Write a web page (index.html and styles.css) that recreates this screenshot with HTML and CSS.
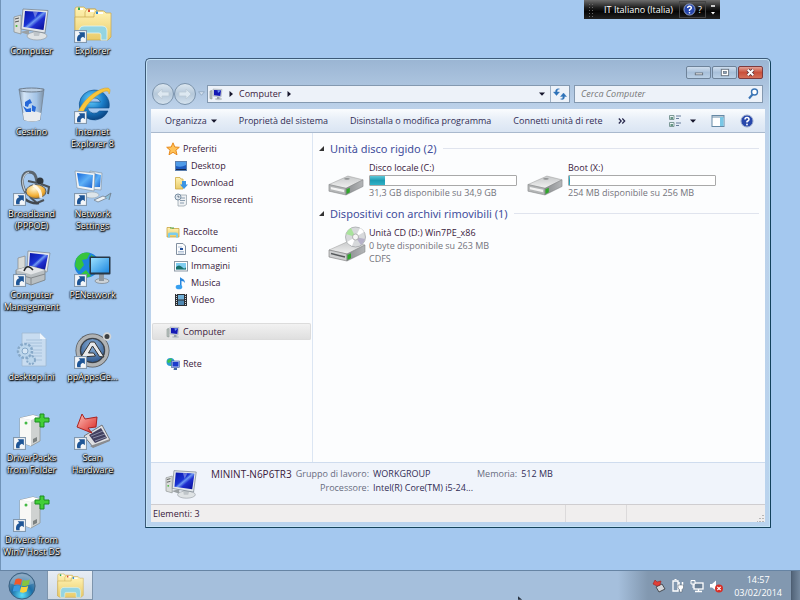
FILE: index.html
```html
<!DOCTYPE html>
<html lang="it">
<head>
<meta charset="utf-8">
<title>Computer</title>
<link rel="stylesheet" href="styles.css">
</head>
<body>
<svg class="defs" aria-hidden="true">
  <defs>
    <linearGradient id="screen" x1="0" y1="0" x2="1" y2="1"><stop offset="0" stop-color="#0712a8"/><stop offset=".42" stop-color="#1a34d4"/><stop offset=".5" stop-color="#6f9af2"/><stop offset=".62" stop-color="#1f2fd0"/><stop offset="1" stop-color="#050a8c"/></linearGradient>
    <linearGradient id="lcd" x1="0" y1="0" x2="1" y2="1"><stop offset="0" stop-color="#1767d8"/><stop offset=".5" stop-color="#5db0f8"/><stop offset="1" stop-color="#1c63cf"/></linearGradient>
    <linearGradient id="cyan" x1="0" y1="0" x2="1" y2="1"><stop offset="0" stop-color="#9be0ff"/><stop offset="1" stop-color="#1d88e0"/></linearGradient>
    <linearGradient id="metal" x1="0" y1="0" x2="0" y2="1"><stop offset="0" stop-color="#fff"/><stop offset="1" stop-color="#b3b7bb"/></linearGradient>
    <linearGradient id="side" x1="0" y1="0" x2="1" y2="0"><stop offset="0" stop-color="#8b8e90"/><stop offset="1" stop-color="#b4b6b8"/></linearGradient>
    <linearGradient id="top" x1="0" y1="0" x2="0" y2="1"><stop offset="0" stop-color="#c6c8c9"/><stop offset="1" stop-color="#f1f1f1"/></linearGradient>
    <linearGradient id="manila" x1="0" y1="0" x2="0" y2="1"><stop offset="0" stop-color="#fff3b4"/><stop offset="1" stop-color="#e9cb69"/></linearGradient>
    <linearGradient id="glass" x1="0" y1="0" x2="1" y2="0"><stop offset="0" stop-color="#7f95aa"/><stop offset=".2" stop-color="#d8e8f8"/><stop offset=".7" stop-color="#a3c3e6"/><stop offset="1" stop-color="#7b8c9d"/></linearGradient>
    <radialGradient id="ball" cx=".4" cy=".3" r=".8"><stop offset="0" stop-color="#6bd4ff"/><stop offset=".5" stop-color="#1a7dc8"/><stop offset="1" stop-color="#07356f"/></radialGradient>
    <radialGradient id="orb" cx=".5" cy=".85" r=".8"><stop offset="0" stop-color="#5ce0fa"/><stop offset=".5" stop-color="#1c6fa8"/><stop offset="1" stop-color="#7396b5"/></radialGradient>
    <radialGradient id="gold" cx=".4" cy=".3" r=".8"><stop offset="0" stop-color="#fff5cf"/><stop offset=".6" stop-color="#f4b33c"/><stop offset="1" stop-color="#a86d14"/></radialGradient>
    <linearGradient id="red" x1="0" y1="0" x2="1" y2="1"><stop offset="0" stop-color="#ffc0b8"/><stop offset="1" stop-color="#d8231f"/></linearGradient>
    <radialGradient id="autoit" cx=".5" cy=".3" r=".7"><stop offset="0" stop-color="#8fb4dc"/><stop offset="1" stop-color="#2d568c"/></radialGradient>
  </defs>

  <symbol id="i-shortcut" viewBox="0 0 12 12"><rect x=".5" y=".5" width="11" height="11" fill="#f3f6f9" stroke="#8298ae"/><path d="M3 10.300C2.300 6.500 3.800 4.600 5.800 4L4.300 2H10V7.700L8.300 6.200C6.200 6.800 5.800 8.200 6.200 10.300Z" fill="#1e5596"/></symbol>

  <symbol id="i-computer" viewBox="0 0 38 36">
    <path d="M1 11L8 9V28L1 26Z" fill="#d9dcda" stroke="#878c8c" stroke-width=".7"/><path d="M2 13L6 12M2 16L6 15" stroke="#555"/><circle cx="3.500" cy="20" r="1" fill="#47b83b"/>
    <path d="M7 26L16 24L16 29Z" fill="#9ba1a4"/>
    <ellipse cx="24" cy="30" rx="10" ry="4" fill="#dfe3e5" stroke="#969da3" stroke-width=".7"/><path d="M20 23H28L26 30H21Z" fill="#bfc5c9"/>
    <path d="M10 3L35 4.500L32 27L8 23Z" fill="#e3e7ea" stroke="#7b858e" stroke-width=".8"/><path d="M12 5L33 6.300L30.500 24L10.500 21Z" fill="url(#screen)"/><path d="M20 5.500L25 5.800L22 12Z" fill="#fff" opacity=".35"/>
  </symbol>

  <symbol id="i-folders" viewBox="0 0 38 36">
    <path d="M1 3Q1 1 3 1H10L12 3H22V32H1Z" fill="url(#manila)" stroke="#c8a64c" stroke-width=".7"/><path d="M11 6L13 3H21L23 5H29V32H11Z" fill="url(#manila)" stroke="#c8a64c" stroke-width=".7"/>
    <path d="M20 8L22 5H30L32 7H37V31L34 34H4L1 32V11H20Z" fill="url(#manila)" stroke="#c8a64c" stroke-width=".7"/>
    <path d="M4 2H9V4H4Z" fill="#fff"/><path d="M4 1.500H6V4H4Z" fill="#34a853"/><path d="M14 4H20V6H14Z" fill="#fff"/><path d="M14 3.500H16V6H14Z" fill="#d84a33"/><path d="M23 6H29V8H23Z" fill="#fff"/><path d="M22 5.500H24V8H22Z" fill="#2988d4"/>
    <path d="M5 34V26Q5 20 10 20H28Q33 20 33 25V34H27V29Q27 27 25 27H13Q11 27 11 29V34Z" fill="#8bd5ee" stroke="#e4f9ff" stroke-width=".8" opacity=".9"/>
  </symbol>

  <symbol id="i-bin" viewBox="0 0 38 36">
    <path d="M6 2L31 2L27 33Q19 36 11 33Z" fill="url(#glass)" stroke="#778797" opacity=".9"/>
    <path d="M10 26Q18 22 28 26L27 33Q19 36 11 33Z" fill="#e9ecef"/><ellipse cx="18.500" cy="3" rx="12.500" ry="2" fill="#b9cde2" stroke="#6f7e8e"/>
    <path d="M12 15L17 12L19 16L16 17L15 20L12 19ZM10 19L14 22L18 21V25L13 25ZM19 18L23 20L22 25L19 24Z" fill="#2668d8"/>
  </symbol>

  <symbol id="i-ie" viewBox="0 0 38 36">
    <path d="M20 3A15 15 0 1 0 34 24H25.500A7 7 0 0 1 13.500 21H35A15 15 0 0 0 20 3ZM13.500 15A7 6.500 0 0 1 26.500 15Z" fill="url(#ball)" fill-rule="evenodd" stroke="#0d4c86" stroke-width=".6"/>
    <path d="M8 29C2 34 2 28 6 21C12 10 26 0 34 1C37 2 36 5 35 7C35 4 33 3 29 5C20 9 10 19 8 29Z" fill="#f8c63c" stroke="#d99a1c" stroke-width=".5"/>
  </symbol>

  <symbol id="i-phone" viewBox="0 0 38 36">
    <path d="M13 24C6 12 10 3 16 3C22 3 23 7 24 13" fill="none" stroke="#5c666f" stroke-width="3"/><path d="M12 22C7 12 11 4 16 3.500" fill="none" stroke="#c5ced5" stroke-width="1.200"/>
    <ellipse cx="27" cy="12" rx="3.500" ry="3.500" fill="#30373d"/><path d="M24 14L15 12M28 15L36 18L35 25M17 28L24 34L31 31" fill="none" stroke="#4b5258" stroke-width="2"/>
    <ellipse cx="23" cy="22.500" rx="10" ry="7" fill="url(#gold)" stroke="#5b6064" stroke-width="1"/><path d="M20 16Q28 20 28 29" fill="none" stroke="#fff" stroke-width="3" opacity=".8"/><path d="M12 30Q18 35 26 34" fill="none" stroke="#42484e" stroke-width="2.500"/>
  </symbol>

  <symbol id="i-lan" viewBox="0 0 38 36">
    <path d="M16 2L28 4L27 21L16 20Z" fill="#e5edf5" stroke="#8596a6" stroke-width=".7"/><path d="M18 4L27 6L26 18L18 18Z" fill="url(#lcd)"/>
    <path d="M1 2L21 4L20 22L3 19Z" fill="#eff4f8" stroke="#8596a6" stroke-width=".7"/><path d="M3 4L19 6L18 19L5 17Z" fill="url(#lcd)"/><ellipse cx="18" cy="26" rx="7" ry="3" fill="#dde5ea" stroke="#9aa7b0" stroke-width=".6"/>
    <path d="M20 31L29 27L33 29L24 33Z" fill="#edf2f5" stroke="#74828f" stroke-width=".8"/><path d="M31 28L37 24L35 31" fill="#8bbfda" stroke="#768796"/>
  </symbol>

  <symbol id="i-manage" viewBox="0 0 38 36">
    <path d="M5 8L12 6V22L5 20Z" fill="#d9dcd9" stroke="#888" stroke-width=".7"/><path d="M15 1L37 3L34 22L14 19Z" fill="#e7eaee" stroke="#7c858d" stroke-width=".7"/><path d="M17 3L35 5L32 20L16 17Z" fill="url(#screen)"/>
    <path d="M3 20L17 16L32 20V30L18 35L3 29Z" fill="#b9bfc2" stroke="#777d80" stroke-width=".8"/><path d="M3 20L17 16L32 20L18 24.500Z" fill="#e3e6e8"/><path d="M3 24L18 28L32 24M18 28V35" fill="none" stroke="#84898c"/><path d="M11 21Q14 13 20 20" fill="none" stroke="#262a2d" stroke-width="1.500"/>
  </symbol>

  <symbol id="i-globe" viewBox="0 0 38 36">
    <circle cx="13" cy="15" r="12.500" fill="#1d83df"/><path d="M2 9Q7 1 16 3L13 9L8 10L10 15L5 21L1 16ZM17 5Q24 8 24 14L20 20L15 17L16 11ZM7 24L12 20L17 26L12 28Z" fill="#36c43d"/>
    <ellipse cx="28" cy="31" rx="7" ry="2.500" fill="#cdd3d8" stroke="#7a8289" stroke-width=".7"/><path d="M25 24H30V31H25Z" fill="#8e979f"/><rect x="15.500" y="6.500" width="21" height="18" rx="1" fill="#273746"/><rect x="17" y="8" width="18" height="14.500" fill="url(#cyan)"/>
  </symbol>

  <symbol id="i-ini" viewBox="0 0 38 36">
    <path d="M9 1H27L33 7V34H9Z" fill="#c8dcf0" stroke="#9fb8d0" stroke-width=".8"/><path d="M27 1V7H33Z" fill="#eef6fd"/><path d="M13 8H29M13 11H29M13 14H29M20 18H29M20 21H29M20 24H29M20 28H29" stroke="#a8c2dc"/>
    <circle cx="12" cy="19" r="7" fill="#bcd6ec" stroke="#87a9c9" stroke-width="2.500" stroke-dasharray="2.500 1.500"/><circle cx="12" cy="19" r="3" fill="#d5e6f5" stroke="#87a9c9"/><circle cx="18" cy="28" r="4" fill="#bcd6ec" stroke="#87a9c9" stroke-width="2" stroke-dasharray="2 1.200"/>
  </symbol>

  <symbol id="i-autoit" viewBox="0 0 38 36">
    <circle cx="18.500" cy="18.500" r="17" fill="#55585b"/><circle cx="18.500" cy="18.500" r="14.500" fill="none" stroke="#b0b3b5" stroke-width="3.500"/><circle cx="18.500" cy="18.500" r="12" fill="url(#autoit)" stroke="#35393e"/>
    <path d="M7 25L16.500 10H20.500L30 25L25.500 24.500L18.500 14L14.500 21H19.500L21.500 24Z" fill="#e7e9eb" stroke="#333" stroke-width="1"/><circle cx="33" cy="4.500" r="3.400" fill="#3d4043" stroke="#d3d6d8" stroke-width="1.800"/>
  </symbol>

  <symbol id="i-tower" viewBox="0 0 38 36">
    <path d="M7 5L20 2L27 4V28L18 33L7 29Z" fill="#cfd2d1" stroke="#8f9493" stroke-width=".8"/><path d="M7 5L18 7V33L7 29Z" fill="#f8f8f6"/><path d="M7 5L20 2L27 4L18 7Z" fill="#fff"/><circle cx="13" cy="10" r="1.500" fill="#43b944"/><path d="M20 26L24 24V28L20 30Z" fill="#7c8180"/>
    <path d="M27 1H31V5H36V9H31V14H27V9H22V5H27Z" fill="#43cf37" stroke="#1c8c20" stroke-width="1"/>
  </symbol>

  <symbol id="i-scan" viewBox="0 0 38 36">
    <path d="M10 23L28 12L36 27L19 34Z" fill="#dfe0e3" stroke="#73777d"/><path d="M15 22L27 15L33 25L21 30Z" fill="#41405f"/><path d="M17 23L29 18M19 25L31 21M21 28L32 24" stroke="#878ba4"/><path d="M16 33L36 26V28L19 35Z" fill="#8a8c90"/>
    <path d="M3 14L8 1L11 6L23 4L22 14L14 15L18 20Z" fill="url(#red)" stroke="#a82320"/>
  </symbol>

  <symbol id="i-drive" viewBox="0 0 38 22">
    <path d="M1 10L21 1L37 5L19 14Z" fill="url(#top)" stroke="#999" stroke-width=".5"/><path d="M1 10L19 14V21L1 17Z" fill="#b4b6b7" stroke="#848688" stroke-width=".6"/><path d="M3 12.500L17 15.500V18L3 15Z" fill="#f4f4f4"/><ellipse cx="20" cy="4" rx="3" ry="1" fill="#8f9192"/><path d="M19 14L37 5V12L19 21Z" fill="url(#side)" stroke="#7a7c7e" stroke-width=".5"/><path d="M19.500 15L23 13.300V18L19.500 20Z" fill="#2fa82b"/>
  </symbol>

  <symbol id="i-cd" viewBox="0 0 38 36">
    <path d="M1 24L21 15L37 19L19 28Z" fill="url(#top)" stroke="#999" stroke-width=".5"/><path d="M1 24L19 28V35L1 31Z" fill="#cfd0d1" stroke="#777" stroke-width=".6"/><path d="M3 27.500L17 31" stroke="#55585a" stroke-width="1.300"/><path d="M19 28L37 19V26L19 35Z" fill="url(#side)" stroke="#7a7c7e" stroke-width=".5"/><path d="M19.500 29L23 27.300V32L19.500 34Z" fill="#2fa82b"/>
    <circle cx="27.500" cy="11" r="10" fill="#d7d9db" stroke="#9b9ea0" stroke-width=".7"/><path d="M27.500 11L18 8A10 10 0 0 1 23 2Z" fill="#a9e39c"/><path d="M27.500 11L32 2A10 10 0 0 1 36 6Z" fill="#fff"/><path d="M27.500 11L19 16A10 10 0 0 0 24 20Z" fill="#fff"/><path d="M27.500 11L37 13A10 10 0 0 1 33 19Z" fill="#b5b1c8"/><circle cx="27.500" cy="11" r="3" fill="#f7f7f7" stroke="#999" stroke-width=".7"/>
  </symbol>

  <symbol id="i-star" viewBox="0 0 14 14"><path d="M7 .8L8.800 5L13.300 5.300L9.900 8.200L11 12.800L7 10.300L3 12.800L4.100 8.200L.7 5.300L5.200 5Z" fill="#ffc35a" stroke="#e78a1d"/></symbol>
  <symbol id="i-desk" viewBox="0 0 14 14"><rect x="1.500" y="2.500" width="11" height="9" fill="#1e5cc0" stroke="#5c7fae"/><path d="M2 3H12V6Q7 9 2 7Z" fill="#4f9be8"/><path d="M2 10.500H12" stroke="#15284d"/></symbol>
  <symbol id="i-down" viewBox="0 0 14 14"><path d="M1.500 1.500H6L7 3H9V13H1.500Z" fill="url(#manila)" stroke="#cda842" stroke-width=".8"/><path d="M8 5H12V8.500H14L10 13L6 8.500H8Z" fill="#3a94e4"/></symbol>
  <symbol id="i-recent" viewBox="0 0 14 14"><path d="M4 2H12.500V11.500L10 13H4Z" fill="#eef1f3" stroke="#9ba6ae" stroke-width=".8"/><path d="M6 5H11M6 7.500H11M6 10H10" stroke="#8a9db0"/><circle cx="4" cy="4" r="3" fill="#dfe7ee" stroke="#7a8fa2"/><path d="M4 2.500V4H5.500" fill="none" stroke="#4c5e6e" stroke-width=".8"/></symbol>
  <symbol id="i-lib" viewBox="0 0 14 14"><path d="M1 2.500H5L6 3.500H13V12H1Z" fill="url(#manila)" stroke="#caa444" stroke-width=".8"/><path d="M4 3H8" stroke="#49a34b"/><path d="M2 12.500V9Q2 7.500 4 7.500H10Q12 7.500 12 9V12.500H10V10H4V12.500Z" fill="#7bcdec"/></symbol>
  <symbol id="i-doc" viewBox="0 0 14 14"><path d="M2.500 1.500H9L11.500 4V12.500H2.500Z" fill="#fbfcfd" stroke="#8290a0"/><path d="M4 5H8M4 9.500H10M4 11H10" stroke="#9fb3cc" stroke-width=".8"/><path d="M6 6H9V8H6Z" fill="#23509b"/></symbol>
  <symbol id="i-pic" viewBox="0 0 14 14"><rect x=".5" y="2.500" width="13" height="9.500" fill="#fff" stroke="#8c99a6"/><rect x="2" y="4" width="10" height="6.500" fill="#7fcdf0"/><path d="M2 8Q5 5 8 8T12 8V10.500H2Z" fill="#17706b"/></symbol>
  <symbol id="i-music" viewBox="0 0 14 14"><path d="M6 11V1C8 3 11 3 11 7Q10 5 7.500 5V11Z" fill="#2987dd"/><ellipse cx="5" cy="11" rx="3.300" ry="2.300" fill="#37a0f0"/></symbol>
  <symbol id="i-film" viewBox="0 0 14 14"><rect x="1" y="1" width="12" height="12" fill="#2c2f34"/><path d="M2.500 1V13M11.500 1V13" stroke="#d7dadd" stroke-width="1" stroke-dasharray="1 1"/><rect x="4" y="2" width="6" height="4.500" fill="#6fb0d8"/><rect x="4" y="7.500" width="6" height="4.500" fill="#4f88b2"/></symbol>
  <symbol id="i-pc" viewBox="0 0 14 14"><path d="M1 4L3 3.500V12L1 11.500Z" fill="#b9c4c0" stroke="#8a9492" stroke-width=".6"/><path d="M4 2L13 2.500L12 10L4 9Z" fill="#cfd6de" stroke="#9aa3ac" stroke-width=".5"/><path d="M5 3L12 3.300L11.300 9L5 8.200Z" fill="#1418b4"/><path d="M8.500 3.200L11.800 3.400L9 6Z" fill="#6f95f0"/><ellipse cx="9.500" cy="12" rx="3.500" ry="1.200" fill="#c2c8cd"/><path d="M8 10H10.500V12H8Z" fill="#98a0a7"/></symbol>
  <symbol id="i-net" viewBox="0 0 14 14"><circle cx="4.500" cy="5" r="4" fill="#2a9bd4"/><path d="M1 4Q3 1 6 1.500L5 5L2 6ZM4 9L6 6L8 8Z" fill="#3fc44a"/><rect x="5.500" y="4" width="8" height="6.500" fill="#b9cdf2" stroke="#3a559b" stroke-width=".6"/><rect x="6.500" y="5" width="6" height="4.500" fill="#1c3ccc"/><path d="M8 11H11V13H7.500Z" fill="#4567a6"/></symbol>
  <symbol id="i-help" viewBox="0 0 14 14"><circle cx="7" cy="7" r="6" fill="#2747ab" stroke="#99a9cd"/><path d="M5 5.500Q5 3.500 7 3.500T9 5.500Q9 6.500 7 7.500V8.500" fill="none" stroke="#fff" stroke-width="1.500"/><circle cx="7" cy="10.500" r=".9" fill="#fff"/></symbol>
</svg>

<main class="desktop">
  <ul class="shortcuts">
    <li><a href="#"><span class="pic"><svg class="art"><use href="#i-computer"/></svg></span>Computer</a></li>
    <li><a href="#"><span class="pic"><svg class="art"><use href="#i-bin"/></svg></span>Cestino</a></li>
    <li><a href="#"><span class="pic"><svg class="art"><use href="#i-phone"/></svg><svg class="arrow"><use href="#i-shortcut"/></svg></span>Broadband (PPPOE)</a></li>
    <li><a href="#"><span class="pic"><svg class="art"><use href="#i-manage"/></svg><svg class="arrow"><use href="#i-shortcut"/></svg></span>Computer Management</a></li>
    <li><a href="#"><span class="pic"><svg class="art"><use href="#i-ini"/></svg></span>desktop.ini</a></li>
    <li><a href="#"><span class="pic"><svg class="art"><use href="#i-tower"/></svg><svg class="arrow"><use href="#i-shortcut"/></svg></span>DriverPacks from Folder</a></li>
    <li><a href="#"><span class="pic"><svg class="art"><use href="#i-tower"/></svg><svg class="arrow"><use href="#i-shortcut"/></svg></span>Drivers from Win7 Host DS</a></li>
    <li><a href="#"><span class="pic"><svg class="art"><use href="#i-folders"/></svg><svg class="arrow"><use href="#i-shortcut"/></svg></span>Explorer</a></li>
    <li><a href="#"><span class="pic"><svg class="art"><use href="#i-ie"/></svg><svg class="arrow"><use href="#i-shortcut"/></svg></span>Internet Explorer 8</a></li>
    <li><a href="#"><span class="pic"><svg class="art"><use href="#i-lan"/></svg><svg class="arrow"><use href="#i-shortcut"/></svg></span>Network Settings</a></li>
    <li><a href="#"><span class="pic"><svg class="art"><use href="#i-globe"/></svg><svg class="arrow"><use href="#i-shortcut"/></svg></span>PENetwork</a></li>
    <li><a href="#"><span class="pic"><svg class="art"><use href="#i-autoit"/></svg><svg class="arrow"><use href="#i-shortcut"/></svg></span>ppAppsGe...</a></li>
    <li><a href="#"><span class="pic"><svg class="art"><use href="#i-scan"/></svg><svg class="arrow"><use href="#i-shortcut"/></svg></span>Scan Hardware</a></li>
  </ul>

  <div class="langbar">
    <span class="grip"></span>
    <button class="lang">IT Italiano (Italia)</button>
    <button class="langhelp" aria-label="Guida"><svg><use href="#i-help"/></svg>?</button>
    <button class="langmenu" aria-label="Opzioni"><svg viewBox="0 0 6 12"><path d="M1 2H5" stroke="#fff" stroke-width="1.500"/><path d="M1 8H5L3 10.500Z" fill="#fff"/></svg></button>
  </div>

  <section class="window" aria-label="Computer">
    <header class="titlebar">
      <button class="cap" aria-label="Riduci a icona"><svg viewBox="0 0 24 12"><rect x="8.500" y="6.500" width="8" height="2" fill="#fff" stroke="#68737f"/></svg></button>
      <button class="cap" aria-label="Ingrandisci"><svg viewBox="0 0 24 12"><rect x="8.500" y="2.500" width="8" height="7" fill="#fff" stroke="#68737f"/><rect x="11" y="5" width="3" height="2" fill="#8ba3bd" stroke="#68737f" stroke-width=".8"/></svg></button>
      <button class="cap close" aria-label="Chiudi"><svg viewBox="0 0 24 12"><path d="M9 3L15 9M15 3L9 9" stroke="#5d3238" stroke-width="4"/><path d="M9 3L15 9M15 3L9 9" stroke="#fff" stroke-width="2.200"/></svg></button>
    </header>

    <div class="navrow">
      <div class="history">
        <button class="round" aria-label="Indietro"><svg viewBox="0 0 20 20"><path d="M9 5L4 10L9 15V12H16V8H9Z" fill="#dde8f1" stroke="#bccad6" stroke-width=".8"/></svg></button>
        <button class="round" aria-label="Avanti"><svg viewBox="0 0 20 20"><path d="M11 5L16 10L11 15V12H4V8H11Z" fill="#dde8f1" stroke="#bccad6" stroke-width=".8"/></svg></button>
        <svg class="recent" viewBox="0 0 6 6"><path d="M.5 1.500H5.500L3 4.500Z" fill="#d8e5f2" stroke="#91a9c2" stroke-width=".8"/></svg>
      </div>
      <nav class="address" aria-label="Indirizzo">
        <svg class="small"><use href="#i-pc"/></svg>
        <svg class="tri" viewBox="0 0 6 6"><path d="M1.500 0V6L5 3Z"/></svg>
        <a href="#">Computer</a>
        <svg class="tri" viewBox="0 0 6 6"><path d="M1.500 0V6L5 3Z"/></svg>
        <button class="pathmenu" aria-label="Posizioni precedenti"><svg class="tri" viewBox="0 0 6 6"><path d="M0 1.500H6L3 4.700Z"/></svg></button>
        <button class="reload" aria-label="Aggiorna"><svg class="small" viewBox="0 0 14 14"><path d="M6.500 2Q4 1.500 4 5H6.500L3.500 8.500L.5 5H2.500Q2.500 1 6.500 2ZM7.500 12Q10 12.500 10 9.500H7.500L10.500 6L13.500 9.500H11.500Q11.500 13.500 7.500 12Z" fill="#2d72b8" stroke="#2d72b8" stroke-width=".4"/></svg></button>
      </nav>
      <label class="search"><input type="search" placeholder="Cerca Computer" aria-label="Cerca Computer"><svg class="small" viewBox="0 0 14 14"><circle cx="8.500" cy="5" r="3" fill="#fff" stroke="#3b75b5" stroke-width="1.400"/><path d="M6.500 7.500L3 11.500" stroke="#3b75b5" stroke-width="2"/></svg></label>
    </div>

    <div class="toolbar">
      <button>Organizza <svg class="tri" viewBox="0 0 6 6"><path d="M0 1.500H6L3 4.700Z"/></svg></button>
      <button>Proprietà del sistema</button>
      <button>Disinstalla o modifica programma</button>
      <button>Connetti unità di rete</button>
      <button class="more" aria-label="Altri comandi"><svg viewBox="0 0 8 6"><path d="M.8 .5L3.200 3L.8 5.500M4.300 .5L6.700 3L4.300 5.500" fill="none" stroke="#26264a" stroke-width="1.200"/></svg></button>
      <span class="views">
        <button aria-label="Visualizzazione"><svg class="small" viewBox="0 0 14 14"><path d="M1.500 1.500H6V5.500H1.500ZM1.500 8.500H6V12.500H1.500Z" fill="#e9f2f4" stroke="#7e9a98"/><path d="M2.500 4H5M2.500 11H5" stroke="#3b7960" stroke-width="1.500"/><path d="M8 2H13M8 4.500H11M8 9H13M8 11.500H11" stroke="#667d9b"/></svg><svg class="tri" viewBox="0 0 6 6"><path d="M0 1.500H6L3 4.700Z"/></svg></button>
        <button aria-label="Riquadro di anteprima"><svg class="small" viewBox="0 0 14 14"><rect x="1" y="1.500" width="12" height="11" fill="#fff" stroke="#6689a5"/><path d="M1 3H13" stroke="#6689a5"/><rect x="9" y="3" width="3.500" height="9" fill="#79c7e6"/></svg></button>
        <button aria-label="Guida"><svg class="small"><use href="#i-help"/></svg></button>
      </span>
    </div>

    <div class="panes">
      <nav class="tree" aria-label="Spostamento">
        <ul>
          <li class="head"><a href="#"><svg class="small"><use href="#i-star"/></svg>Preferiti</a></li>
          <li><a href="#"><svg class="small"><use href="#i-desk"/></svg>Desktop</a></li>
          <li><a href="#"><svg class="small"><use href="#i-down"/></svg>Download</a></li>
          <li><a href="#"><svg class="small"><use href="#i-recent"/></svg>Risorse recenti</a></li>
        </ul>
        <ul>
          <li class="head"><a href="#"><svg class="small"><use href="#i-lib"/></svg>Raccolte</a></li>
          <li><a href="#"><svg class="small"><use href="#i-doc"/></svg>Documenti</a></li>
          <li><a href="#"><svg class="small"><use href="#i-pic"/></svg>Immagini</a></li>
          <li><a href="#"><svg class="small"><use href="#i-music"/></svg>Musica</a></li>
          <li><a href="#"><svg class="small"><use href="#i-film"/></svg>Video</a></li>
        </ul>
        <ul><li class="head selected"><a href="#"><svg class="small"><use href="#i-pc"/></svg>Computer</a></li></ul>
        <ul><li class="head"><a href="#"><svg class="small"><use href="#i-net"/></svg>Rete</a></li></ul>
      </nav>

      <div class="files">
        <h2><svg class="fold" viewBox="0 0 6 6"><path d="M6 0V6H0Z"/></svg>Unità disco rigido (2)</h2>
        <div class="tiles">
          <article class="tile"><svg class="disk"><use href="#i-drive"/></svg><div class="info"><h3>Disco locale (C:)</h3><div class="meter"><span style="width:10%"></span></div><p>31,3 GB disponibile su 34,9 GB</p></div></article>
          <article class="tile"><svg class="disk"><use href="#i-drive"/></svg><div class="info"><h3>Boot (X:)</h3><div class="meter"><span style="width:1%"></span></div><p>254 MB disponibile su 256 MB</p></div></article>
        </div>
        <h2><svg class="fold" viewBox="0 0 6 6"><path d="M6 0V6H0Z"/></svg>Dispositivi con archivi rimovibili (1)</h2>
        <div class="tiles">
          <article class="tile"><svg class="disc"><use href="#i-cd"/></svg><div class="info"><h3>Unità CD (D:) Win7PE_x86</h3><p>0 byte disponibile su 263 MB</p><p>CDFS</p></div></article>
        </div>
      </div>
    </div>

    <div class="details">
      <svg class="machine"><use href="#i-computer"/></svg>
      <dl>
        <dt class="host">MININT-N6P6TR3</dt>
        <dt>Gruppo di lavoro:</dt><dd>WORKGROUP</dd><dt>Memoria:</dt><dd>512 MB</dd>
        <dt class="cpu">Processore:</dt><dd>Intel(R) Core(TM) i5-24...</dd>
      </dl>
    </div>
    <footer class="status"><span>Elementi: 3</span><span></span><span><svg viewBox="0 0 8 8"><path d="M6 1V2M6 4V5M3 4V5M6 7V8M3 7V8M0 7V8" stroke="#a5a5a5" stroke-width="1.500"/></svg></span></footer>
  </section>
</main>

<footer class="taskbar">
  <button class="start" aria-label="Start"><svg viewBox="0 0 30 30"><circle cx="15" cy="15" r="14" fill="url(#orb)" stroke="#385b7b"/><path d="M2 12A13.500 13.500 0 0 1 28 12Q15 18 2 12Z" fill="#fff" opacity=".22"/><path d="M8 8Q11 6 15 8L13.500 14Q10 12.500 6.500 14Z" fill="#f2582a"/><path d="M16 8.500Q20 10 23.500 8L22 14Q18 16 14.500 14.500Z" fill="#86c440"/><path d="M6.300 15Q10 13.500 13.200 15L11.800 21Q8.500 19.500 5 21Z" fill="#3c9ae0"/><path d="M14.200 15.500Q18 17 21.700 15L20 21Q17 23 12.700 21.500Z" fill="#fcd13b"/></svg></button>
  <button class="task" aria-label="Computer"><svg><use href="#i-folders"/></svg></button>
  <svg class="cursor" viewBox="0 0 6 4"><path d="M0 0L5 4H0Z" fill="#283341"/></svg>
  <div class="tray">
    <button aria-label="Rimozione hardware"><svg viewBox="0 0 14 14"><path d="M4 8L10 5L13 10L7 13Z" fill="#d4d6d9" stroke="#494d53"/><path d="M1 5L3 1L5 3L9 2L8 6L5 7Z" fill="#e23f38" stroke="#9b211f" stroke-width=".6"/></svg></button>
    <button aria-label="Alimentazione"><svg viewBox="0 0 14 14"><path d="M2 2H7V12H2Z" fill="none" stroke="#fff" stroke-width="1.300"/><path d="M3.500 .5H5.500" stroke="#fff"/><path d="M8 3V7M11.500 3V7" stroke="#fff" stroke-width="1.500"/><path d="M7 6H12.500V9L11 10.500V13H8.500V10.500L7 9Z" fill="#fff" stroke="#4d5967" stroke-width=".5"/></svg></button>
    <button aria-label="Rete"><svg viewBox="0 0 14 14"><rect x="4" y="4" width="9" height="6" fill="#6d8298" stroke="#fff" stroke-width="1.300"/><path d="M5 12.500H12M8.500 10V12" stroke="#fff" stroke-width="1.300"/><path d="M1 1.500H5V5H1ZM3 5V9" fill="#8fa1b4" stroke="#fff"/></svg></button>
    <button aria-label="Volume"><svg viewBox="0 0 14 14"><path d="M1 5H3L7 1.500V11.500L3 8.500H1Z" fill="#fff"/><circle cx="10" cy="9.500" r="4" fill="#d82e26"/><path d="M8.300 7.800L11.700 11.200M11.700 7.800L8.300 11.200" stroke="#fff" stroke-width="1.200"/></svg></button>
    <time datetime="2014-02-03T14:57">14:57<br>03/02/2014</time>
  </div>
  <button class="peek" aria-label="Mostra desktop"></button>
</footer>
</body>
</html>
```
FILE: styles.css
```css
* { box-sizing: border-box; }
body {
  margin: 0;
  height: 100vh;
  display: flex;
  flex-direction: column;
  overflow: hidden;
  background: #a4c8ef;
  color: #3a1a3c;
  font: 9px/12px "Open Sans", "Noto Sans", sans-serif;
}
svg { display: block; flex: none; }
.defs { position: absolute; width: 0; height: 0; }
button { font: inherit; color: inherit; background: none; border: 0; padding: 0; margin: 0; }
a { color: inherit; text-decoration: none; }
ul, dl, dd, p, h2, h3 { margin: 0; padding: 0; list-style: none; font-weight: 400; }

/* Desktop */
.desktop { flex: 1; min-height: 0; position: relative; border-left: 1px solid #7194b8; }
.shortcuts {
  height: 100%;
  display: grid;
  grid-template-rows: repeat(7, minmax(0, 1fr));
  grid-auto-flow: column;
  grid-auto-columns: 61px;
}
.shortcuts a {
  display: flex;
  flex-direction: column;
  align-items: center;
  padding-top: 6px;
  text-align: center;
  color: #fff;
  text-shadow: 0 0 1px #000, 0 0 2px #000, 1px 1px 1px #000, 0 1px 2px #000;
}
.pic { position: relative; margin-bottom: 3px; }
.art { width: 38px; height: 36px; }
.arrow { position: absolute; left: 0; bottom: -1px; width: 13px; height: 13px; }

.langbar {
  position: absolute;
  top: 0;
  right: 80px;
  width: 136px;
  height: 19px;
  display: flex;
  align-items: center;
  background: linear-gradient(#6d6d6d, #1f1f1f 40%, #050505 60%, #222);
  color: #fff;
}
.grip { width: 6px; height: 14px; margin: 0 4px; background: radial-gradient(#666 1px, transparent 1px) 0 0 / 3px 3px; }
.lang { flex: 1; }
.langhelp { display: flex; align-items: center; gap: 2px; height: 17px; padding: 0 3px; border: 1px solid #444; }
.langhelp svg { width: 13px; height: 13px; }
.langmenu { padding: 0 4px; }
.langmenu svg { width: 6px; height: 12px; }

/* Window frame */
.window {
  position: absolute;
  left: 144px;
  right: 29px;
  top: 58px;
  bottom: 42px;
  display: flex;
  flex-direction: column;
  padding: 0 5px 5px;
  border: 1px solid #2d4a67;
  border-color: #3c5a78 #14425c #14425c #3c5a78;
  border-radius: 5px 5px 1px 1px;
  background: linear-gradient(#9ab5d3, #bdd2ea 50px, #b9d3ee);
  box-shadow: inset 0 0 0 1px #c3e2f6;
}
.titlebar { display: flex; justify-content: flex-end; gap: 1px; height: 24px; padding: 7px 2px 0; }
.cap { height: 13px; border: 1px solid #6e839a; border-radius: 2px; background: linear-gradient(#cfdeee, #a8c0da 50%, #bad0e6); }
.cap svg { width: 23px; height: 11px; }
.close { border-color: #7d3a3d; background: linear-gradient(#e2a196, #c9503b 50%, #d4705a); }

.navrow { display: flex; align-items: center; height: 21px; padding-right: 2px; margin-bottom: 5px; }
.history { display: flex; align-items: center; margin: 0 2px 0 1px; }
.round { border: 1px solid #7c94ac; border-radius: 50%; background: linear-gradient(#dce7f0, #b5c8da 50%, #d4e2ee); }
.round svg { width: 20px; height: 20px; }
.recent { width: 7px; height: 7px; margin-left: 2px; }
.small { width: 14px; height: 14px; }
.tri { width: 6px; height: 6px; fill: #16162c; }
.address, .search { display: flex; align-items: center; height: 18px; border: 1px solid #8499b0; background: #edf2f9; }
.address { flex: 1; gap: 5px; padding-left: 1px; margin-right: 4px; }
.pathmenu { margin-left: auto; }
.reload { height: 100%; padding: 0 2px; border-left: 1px solid #a0b2c6; }
.search { flex: 0 0 189px; padding: 0 2px 0 6px; }
.search input { flex: 1; min-width: 0; padding: 0; border: 0; outline: 0; background: none; font: inherit; font-style: italic; }
.search input::placeholder { color: #777; opacity: 1; }

.toolbar {
  display: flex;
  align-items: center;
  gap: 22px;
  height: 24px;
  flex: none;
  padding: 0 11px 0 14px;
  border-bottom: 1px solid #a9b9cd;
  background: linear-gradient(#fafcfe, #e8eff8 45%, #dae5f3);
  color: #322d55;
}
.toolbar button { display: flex; align-items: center; gap: 4px; white-space: nowrap; }
.toolbar .more { margin-left: -6px; }
.more svg { width: 8px; height: 6px; }
.toolbar .views { display: flex; gap: 15px; margin-left: auto; }
.toolbar .views button { gap: 8px; }

/* Panes */
.panes { flex: 1; min-height: 0; display: flex; background: #fcfdfe; }
.tree { flex: 0 0 162px; display: flex; flex-direction: column; gap: 15px; padding: 7px 1px; border-right: 1px solid #dce6f3; }
.tree a { display: flex; align-items: center; gap: 3px; height: 17px; padding-left: 22px; }
.tree .head a { padding-left: 14px; }
.tree .selected { border-radius: 2px; background: linear-gradient(#f3f3f3, #dedede); box-shadow: inset 0 0 0 1px #dcdcdc; }
.files { flex: 1; min-width: 0; padding: 6px 6px 0; }
h2 { display: flex; align-items: center; gap: 6px; height: 18px; color: #424e9c; font: 11px "Noto Sans", sans-serif; white-space: nowrap; }
h2::after { content: ""; flex: 1; height: 1px; background: #e0e4ee; }
.fold { width: 5px; height: 5px; fill: #333; }
.tiles { display: grid; grid-template-columns: repeat(auto-fill, 199px); padding: 4px 0 5px 9px; }
.tile { display: flex; gap: 5px; min-height: 38px; white-space: nowrap; }
.disk { width: 36px; height: 21px; margin-top: 14px; }
.disc { width: 38px; height: 36px; margin-right: -2px; }
.info { width: 148px; }
h3 { font-size: 9px; line-height: 13px; }
.info p { color: #74747c; line-height: 13px; }
.meter { height: 11px; margin-top: 1px; border: 1px solid #a9a9a9; border-radius: 1px; background: #fff; }
.meter span { display: block; height: 100%; min-width: 1px; background: linear-gradient(#5dc8d8, #1d9cb4 50%, #2fb2c8); }

/* Details and status */
.details { display: flex; height: 42px; padding: 5px 14px 0; gap: 12px; border-top: 1px solid #cfdcee; background: #f0f4fb; flex: none; }
.machine { width: 34px; height: 32px; }
dl { display: grid; grid-template-columns: repeat(5, auto); align-content: start; justify-content: start; gap: 2px 4px; white-space: nowrap; }
dt { color: #686c80; text-align: right; }
dd { color: #322d55; }
.host { color: #3a1a3c; font-size: 10px; }
.cpu { grid-column: 2; }
.status { display: flex; height: 18px; flex: none; align-items: center; border-top: 1px solid #cfcdd0; background: #f0eeee; padding-left: 2px; }
.status span { flex: 0 0 61px; height: 100%; line-height: 17px; }
.status span:first-child { flex: 1; }
.status span + span { border-left: 1px solid #dcdadb; }
.status span:last-child { flex-basis: 139px; display: flex; justify-content: flex-end; align-items: flex-end; }
.status svg { width: 8px; height: 8px; }

/* Taskbar */
.taskbar { flex: none; display: flex; height: 30px; border-top: 1px solid #6684a4; background: #a5bfdc; }
.start { width: 47px; padding-left: 8px; background: #8ba7c5; }
.start svg { width: 28px; height: 28px; }
.task { display: flex; justify-content: center; width: 46px; border: 1px solid #7e95ad; border-top: 0; background: linear-gradient(#e7edf4, #cfdae6); }
.task svg { width: 27px; height: 26px; margin-top: 2px; }
.cursor { width: 5px; height: 4px; margin: auto 95px 0 auto; }
.tray { display: flex; align-items: center; gap: 5px; padding: 0 9px 0 34px; background: linear-gradient(90deg, #a5bfdc, #8298b0 30px); color: #fff; }
.tray svg { width: 14px; height: 14px; }
.tray time { margin-left: 6px; text-align: center; line-height: 13px; }
.peek { width: 9px; border-left: 1px solid #4e5f73; background: linear-gradient(90deg, #53657a, #75899f); }
```
